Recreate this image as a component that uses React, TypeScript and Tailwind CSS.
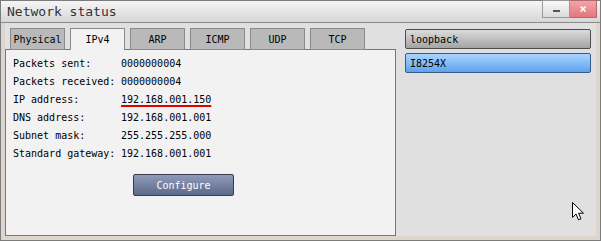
import React from 'react';

const mono = "font-['DejaVu_Sans_Mono',monospace]";

const tabs = ['Physical', 'IPv4', 'ARP', 'ICMP', 'UDP', 'TCP'];

const rows: { label: string; value: string; mark?: boolean }[] = [
  { label: 'Packets sent:', value: '0000000004' },
  { label: 'Packets received:', value: '0000000004' },
  { label: 'IP address:', value: '192.168.001.150', mark: true },
  { label: 'DNS address:', value: '192.168.001.001' },
  { label: 'Subnet mask:', value: '255.255.255.000' },
  { label: 'Standard gateway:', value: '192.168.001.001' },
];

const Cursor = () => (
  <svg width="13" height="19" viewBox="0 0 13 19" className="absolute left-[571px] top-[201px]">
    <path d="M0.5 0.5 L0.5 15.5 L4 12 L6.5 17.8 L9 16.8 L6.6 11.2 L11.5 11.2 Z" fill="#fff" stroke="#000" strokeWidth="1" strokeLinejoin="miter" />
  </svg>
);

export default function App() {
  return (
    <div className={`relative w-[601px] h-[241px] border border-[#7c7c7c] flex flex-col bg-[#e0e0e0] ${mono}`}>
      {/* title bar */}
      <div className="h-[22px] shrink-0 flex justify-between items-start border-b border-[#8a8a8a] bg-gradient-to-b from-[#f6f6f6] to-[#d6d6d6]">
        <div className="pl-[6px] text-[13px] leading-[22px] text-[#333]">Network status</div>
        <div className="flex -mt-px mr-[3px]">
          <div className="w-[28px] h-[18px] border border-[#9a9a9a] bg-gradient-to-b from-[#fafafa] to-[#dadada] flex items-center justify-center">
            <div className="w-[7px] h-[2px] bg-[#555] mt-[3px]" />
          </div>
          <div className="w-[27px] h-[18px] border border-[#b06a6e] border-l-0 bg-gradient-to-b from-[#f2a4a8] to-[#e2777d] flex items-center justify-center text-white text-[12px] font-bold leading-none">
            ×
          </div>
        </div>
      </div>

      {/* body */}
      <div className="flex-1 flex border-x-4 border-b-4 border-[#ddd6ce]">
        <div className="flex flex-col pt-[5px] w-[391px]">
          <div className="flex gap-[5px] pl-[5px] h-[21px] relative z-10">
            {tabs.map(t => (
              <div
                key={t}
                className={`w-[55px] h-[22px] border border-[#8a8a8a] flex items-center justify-center text-[10px] text-black ${
                  t === 'IPv4' ? 'bg-[#f2f2f2] border-b-0' : 'bg-[#b9b9b9]'
                }`}
              >
                {t}
              </div>
            ))}
          </div>
          <div className="flex-1 border border-[#777] bg-[#f2f2f2] pt-[5px] pl-[7px]">
            {rows.map(r => (
              <div key={r.label} className="flex h-[18px] leading-[18px] text-[10px] text-black">
                <span className="w-[108px] whitespace-pre">{r.label}</span>
                <span className={r.mark ? 'underline decoration-2 decoration-[#e00000] underline-offset-[2px]' : ''}>{r.value}</span>
              </div>
            ))}
            <div className="pl-[120px] mt-[11px]">
              <div className="w-[101px] h-[22px] rounded-[2px] border border-[#363c4c] bg-gradient-to-b from-[#8f9bb8] to-[#5c6a8a] flex items-center justify-center text-white text-[10px]">
                Configure
              </div>
            </div>
          </div>
        </div>

        <div className="flex-1 flex flex-col gap-[4px] pl-[9px] pr-[5px] pt-[6px]">
          <div className="h-[20px] rounded-[2px] border border-[#4c4c4c] bg-gradient-to-b from-[#dcdcdc] to-[#a4a4a4] flex items-center pl-[4px] text-[10px] text-black">
            loopback
          </div>
          <div className="h-[20px] rounded-[2px] border border-[#3c5a86] bg-gradient-to-b from-[#a9d5ff] to-[#5ea2ee] flex items-center pl-[4px] text-[10px] text-black">
            I8254X
          </div>
        </div>
      </div>

      <Cursor />
    </div>
  );
}
